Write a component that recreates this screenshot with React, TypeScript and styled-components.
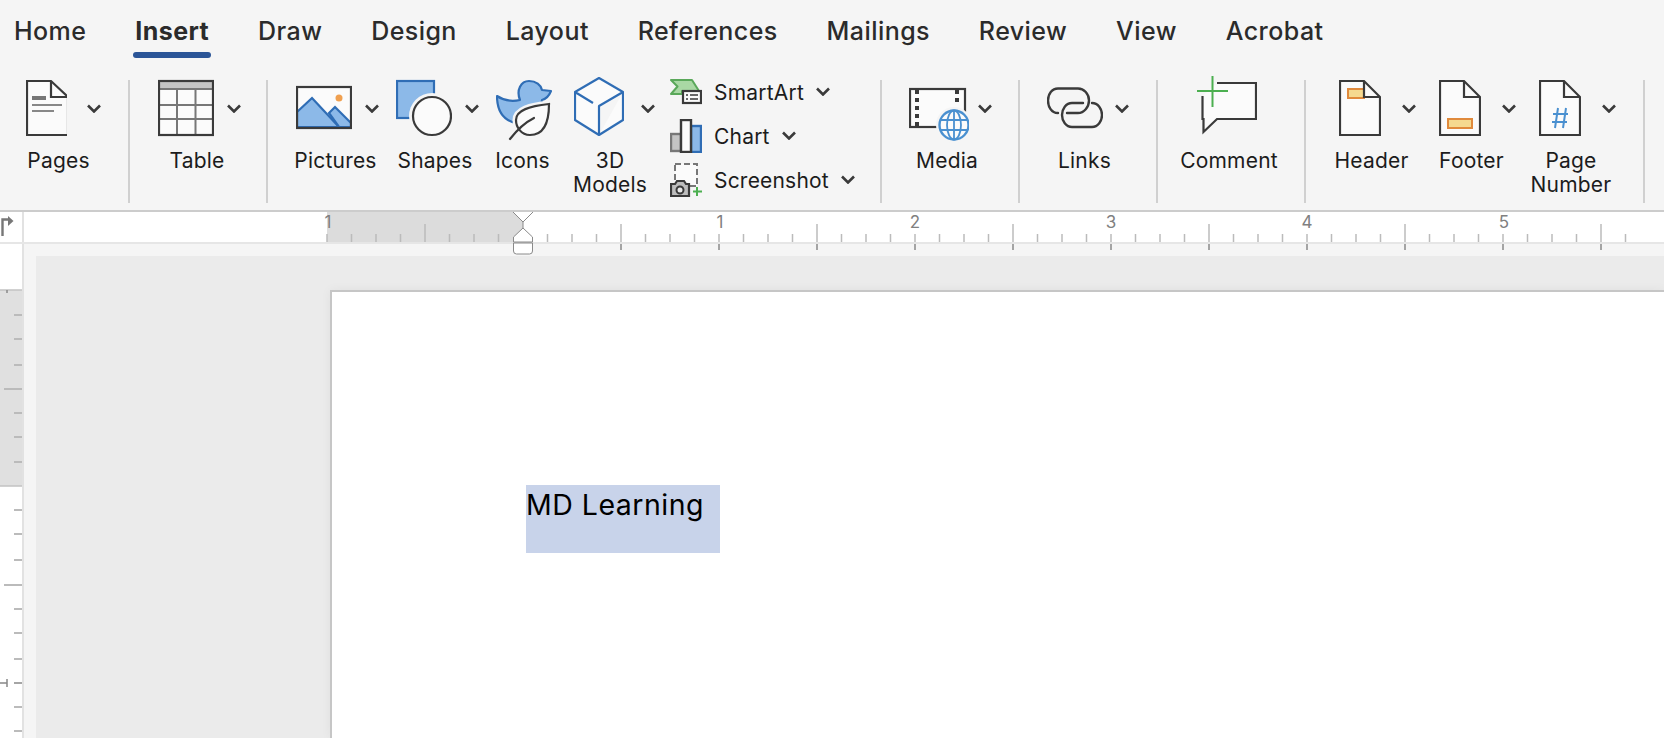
import React from "react";
import styled, { createGlobalStyle } from "styled-components";

const INK = "#3a3a3a";
const BLUE = "#2f6db5";
const SKY = "#8cb9e8";
const PANEL = "#f5f5f5";
const LINE = "2.2";

const GlobalStyle = createGlobalStyle`
  html, body {
    margin: 0;
    height: 100%;
    overflow: hidden;
    background: #ebebeb;
    font-family: Inter, "Liberation Sans", sans-serif;
  }
  #root {
    height: 100%;
  }
`;

const Window = styled.div`
  display: flex;
  flex-direction: column;
  height: 738px;
`;

const Ribbon = styled.header`
  height: 210px;
  flex: none;
  background: ${PANEL};
  border-bottom: 2px solid #cccccc;
`;

const TabBar = styled.nav`
  display: flex;
  gap: 48.8px;
  height: 54px;
  padding: 16px 0 0 14px;
  box-sizing: border-box;
  margin-bottom: 16px;
`;

const Tab = styled.span<{ $active?: boolean }>`
  position: relative;
  height: 30px;
  font-size: 25px;
  line-height: 30px;
  letter-spacing: 0.45px;
  color: #2b2b2b;
  font-weight: ${(p) => (p.$active ? 700 : 500)};

  ${(p) =>
    p.$active &&
    `
    &::after {
      content: "";
      position: absolute;
      left: -2px;
      right: -2px;
      top: 36px;
      height: 6px;
      border-radius: 3px;
      background: #2b5597;
    }
  `}
`;

const Toolbar = styled.div`
  display: flex;
  height: 140px;
`;

const Group = styled.div<{ $width: number; $pad: number }>`
  display: flex;
  flex: none;
  width: ${(p) => p.$width}px;
  padding-left: ${(p) => p.$pad}px;
  box-sizing: border-box;
`;

const Divider = styled.div`
  flex: none;
  width: 2px;
  height: 123px;
  margin-top: 10px;
  background: #d0d0d0;
`;

const Item = styled.div<{ $width: number; $ml?: number }>`
  flex: none;
  width: ${(p) => p.$width}px;
  margin-left: ${(p) => p.$ml ?? 0}px;
  padding-top: 6px;
`;

const IconRow = styled.div<{ $pad: number; $gap?: number }>`
  display: flex;
  align-items: flex-start;
  height: 72px;
  padding-left: ${(p) => p.$pad}px;
  gap: ${(p) => p.$gap ?? 0}px;
`;

const Label = styled.div`
  margin-top: 1px;
  font-size: 21px;
  line-height: 24px;
  letter-spacing: 0.2px;
  text-align: center;
  white-space: nowrap;
  color: #1c1c1c;
`;

const Caret = styled.svg`
  flex: none;
  width: 14px;
  height: 9px;
  fill: none;
  stroke: ${INK};
  stroke-width: 2.6;
`;

const DropCaret = styled(Caret)`
  margin-top: 28px;
`;

const Stack = styled.div`
  display: flex;
  flex-direction: column;
  margin-left: 15px;
`;

const StackRow = styled.div`
  display: flex;
  align-items: center;
  height: 44px;
  font-size: 21px;
  letter-spacing: 0.2px;
  color: #1c1c1c;
`;

const StackIcon = styled.span`
  display: flex;
  flex: none;
  width: 32px;
  margin-right: 12px;
`;

const StackCaret = styled(Caret)`
  margin-left: 12px;
  margin-top: -1px;
`;

const RulerRow = styled.div`
  display: flex;
  flex: none;
  height: 32px;
  background: #ffffff;
  border-bottom: 2px solid #e6e6e6;
  box-sizing: border-box;
`;

const Corner = styled.div`
  flex: none;
  width: 22px;
  border-right: 2px solid #e2e2e2;
`;

const RulerTrack = styled.div`
  position: relative;
  flex: 1;
`;

const RulerDrawing = styled.svg`
  display: block;
  overflow: visible;
`;

const Indent = styled.svg`
  position: absolute;
  left: 489px;
  top: 0;
  overflow: visible;
`;

const Workspace = styled.div`
  display: flex;
  flex: 1;
  min-height: 0;
`;

const SideRuler = styled.div`
  flex: none;
  width: 22px;
  background: #ffffff;
  border-right: 2px solid #e2e2e2;
`;

const Canvas = styled.main`
  flex: 1;
  background: ${PANEL};
  padding: 12px 0 0 12px;
  overflow: hidden;
`;

const Desk = styled.div`
  height: 100%;
  background: #ebebeb;
  padding: 34px 0 0 294px;
  box-sizing: border-box;
`;

const Sheet = styled.div`
  height: 100%;
  background: #ffffff;
  border-top: 2px solid #c6c6c6;
  border-left: 2px solid #c6c6c6;
  box-shadow: 0 0 10px rgba(0, 0, 0, 0.05);
  padding: 193px 0 0 194px;
  box-sizing: border-box;
`;

const Selected = styled.div`
  width: 194px;
  height: 68px;
  background: #c8d3ea;
  color: #000000;
  font-size: 28.5px;
  line-height: 40px;
  letter-spacing: 0.5px;
  white-space: nowrap;
`;

const CaretIcon = ({ as: As = DropCaret }: { as?: typeof DropCaret }) => (
  <As viewBox="0 0 14 9">
    <path d="M1 1.5 L7 7.5 L13 1.5" />
  </As>
);

const PagesIcon = () => (
  <svg width="43" height="72">
    <path d="M1 5H25L42 21V59H1Z" fill="#fbfbfb" stroke={INK} strokeWidth={LINE} />
    <path d="M25 5V21H42" fill="none" stroke={INK} strokeWidth={LINE} />
    <path d="M6 22H20" stroke="#777" strokeWidth="4" />
    <path d="M6 29H36M6 35H28" stroke="#888" strokeWidth="2" />
  </svg>
);

const TableIcon = () => (
  <svg width="56" height="72">
    <rect x="1" y="5" width="54" height="54" fill="#fbfbfb" />
    <rect x="1" y="5" width="54" height="7" fill="#c4c4c4" />
    <path d="M19 12V59M37.5 12V59M1 13H55M1 29H55M1 43H55" stroke="#777" strokeWidth="2" fill="none" />
    <rect x="1" y="5" width="54" height="54" fill="none" stroke={INK} strokeWidth={LINE} />
  </svg>
);

const PicturesIcon = () => (
  <svg width="56" height="72">
    <rect x="1" y="11" width="54" height="41" fill="#fbfbfb" />
    <path d="M1 36L16 22L43 51H1Z" fill={SKY} stroke={BLUE} strokeWidth={LINE} />
    <path d="M33 37L39 31L55 47V51H43Z" fill={SKY} stroke={BLUE} strokeWidth={LINE} />
    <circle cx="43" cy="22" r="3.5" fill="#f0a050" />
    <rect x="1" y="11" width="54" height="41" fill="none" stroke={INK} strokeWidth={LINE} />
  </svg>
);

const ShapesIcon = () => (
  <svg width="56" height="72">
    <rect x="1" y="5" width="37" height="37" fill={SKY} stroke={BLUE} strokeWidth={LINE} />
    <circle cx="36" cy="40" r="23" fill={PANEL} />
    <circle cx="36" cy="40" r="19" fill="#fbfbfb" stroke={INK} strokeWidth={LINE} />
  </svg>
);

const IconsIcon = () => (
  <svg width="56" height="72">
    <path
      d="M1 20C7 24 15 26 24 24C20 14 25 5 33 5C40 5 45 9 46 14L55 15C53 20 50 23 46 24C46 27 44 30 40 32L28 34C22 38 19 42 19 47C8 44 1 36 1 20Z"
      fill={SKY}
      stroke={BLUE}
      strokeWidth={LINE}
      strokeLinejoin="round"
    />
    <path
      d="M53 28C53 48 47 59 34 59C25 59 20 51 20 44C20 34 34 30 53 28Z"
      fill="#fbfbfb"
      stroke={PANEL}
      strokeWidth="7"
    />
    <path d="M53 28C53 48 47 59 34 59C25 59 20 51 20 44C20 34 34 30 53 28Z" fill="#fbfbfb" stroke={INK} strokeWidth={LINE} />
    <path d="M14 63C21 54 28 47 38 42" fill="none" stroke={INK} strokeWidth={LINE} strokeLinecap="round" />
  </svg>
);

const CubeIcon = () => (
  <svg width="50" height="72">
    <path
      d="M25 2L49 16V44L25 59L1 44V16Z M1 16L19 27 M49 16L25 30V59"
      fill="#fbfbfb"
      stroke={BLUE}
      strokeWidth={LINE}
      strokeLinejoin="round"
    />
  </svg>
);

const SmartArtIcon = () => (
  <svg width="32" height="26">
    <path d="M1 1H22L29 12H12V15H1L7.5 7.5Z" fill="#a9d8a4" stroke="#5aa85a" strokeWidth="2" strokeLinejoin="round" />
    <rect x="13" y="12" width="18" height="12" fill="#fbfbfb" stroke={INK} strokeWidth={LINE} />
    <path d="M16 16H18M20 16H28M16 20H18M20 20H28" stroke={INK} strokeWidth="1.6" />
  </svg>
);

const ChartIcon = () => (
  <svg width="32" height="34">
    <rect x="1" y="15" width="10" height="17" fill="#c4c4c4" stroke="#777" strokeWidth="2.4" />
    <rect x="21" y="7" width="10" height="26" fill={SKY} stroke={BLUE} strokeWidth="2.4" />
    <rect x="11" y="1" width="10" height="32" fill="#fbfbfb" stroke={INK} strokeWidth="2.4" />
  </svg>
);

const ScreenshotIcon = () => (
  <svg width="32" height="34">
    <rect x="5" y="1" width="22" height="22" fill="#fbfbfb" stroke="#777" strokeWidth="2" strokeDasharray="6 3" />
    <path d="M1 21H5L7 18H14L16 21H19V33H1Z" fill="#bdbdbd" stroke={INK} strokeWidth={LINE} />
    <circle cx="10" cy="27" r="3.5" fill="#e8e8e8" stroke={INK} strokeWidth="2" />
    <path d="M27 24V33M23 28.5H32" stroke="#4caf50" strokeWidth="2" />
  </svg>
);

const MediaIcon = () => (
  <svg width="60" height="72">
    <rect x="1" y="13" width="55" height="38" fill="#fbfbfb" stroke={INK} strokeWidth={LINE} />
    <path d="M6 16h4M6 24h4M6 32h4M6 40h4M6 48h4M46 16h4M46 24h4" stroke={INK} strokeWidth="4" />
    <circle cx="45" cy="49" r="18" fill={PANEL} />
    <circle cx="45" cy="49" r="14.5" fill="#fbfbfb" stroke="#4a90d0" strokeWidth="2.4" />
    <path d="M31 44H59M31 54H59M45 34V64" stroke="#4a90d0" strokeWidth="1.8" fill="none" />
    <ellipse cx="45" cy="49" rx="7" ry="14.5" stroke="#4a90d0" strokeWidth="1.8" fill="none" />
  </svg>
);

const LinksIcon = () => (
  <svg width="56" height="72">
    <path
      d="M11 37C4 37 1 30 1 24.500C1 18 5 12.500 11 12.500H31C37 12.500 42 18 42 24.500C42 31 37 37 31 37H20"
      fill="none"
      stroke={INK}
      strokeWidth="2.4"
      strokeLinecap="round"
    />
    <path
      d="M36 27H25C19 27 15 33 15 39C15 45 19 51 25 51H45C51 51 55 45 55 39C55 33 51 27 45 27"
      fill="none"
      stroke={INK}
      strokeWidth="2.4"
      strokeLinecap="round"
    />
  </svg>
);

const CommentIcon = () => (
  <svg width="60" height="72">
    <path d="M20 7H59V43H20L6.5 56V43H5.5V20" fill="#fbfbfb" stroke={INK} strokeWidth={LINE} />
    <path d="M15.5 0V31M0 15H31" stroke="#4caf50" strokeWidth="2" />
  </svg>
);

const OutlinedPage = ({ children }: { children?: React.ReactNode }) => (
  <svg width="42" height="72">
    <path d="M1 5H25L41 21V59H1Z" fill="#fbfbfb" stroke={INK} strokeWidth={LINE} />
    {children}
    <path d="M25 5V21H41" fill="none" stroke={INK} strokeWidth={LINE} />
  </svg>
);

const HeaderIcon = () => (
  <OutlinedPage>
    <rect x="9" y="13" width="16" height="9" fill="#f5d98f" stroke="#e08a3c" strokeWidth="2" />
  </OutlinedPage>
);

const FooterIcon = () => (
  <OutlinedPage>
    <rect x="9" y="43" width="24" height="9" fill="#f5d98f" stroke="#e08a3c" strokeWidth="2" />
  </OutlinedPage>
);

const PageNumberIcon = () => (
  <OutlinedPage>
    <path d="M19 32L16 52M27 32L24 52M14 38H29M13 46H28" stroke="#4a90d0" strokeWidth="2" fill="none" />
  </OutlinedPage>
);

const tabs = ["Home", "Insert", "Draw", "Design", "Layout", "References", "Mailings", "Review", "View", "Acrobat"];

const inchMarks = [
  { n: 1, x: 328 },
  { n: 1, x: 720 },
  { n: 2, x: 915 },
  { n: 3, x: 1111 },
  { n: 4, x: 1307 },
  { n: 5, x: 1504 },
];

const ORIGIN = 499;
const STEP = 24.5;
const steps = Array.from({ length: 54 }, (_, i) => i - 8);

const sideTicks = [
  { y: 71, long: false },
  { y: 95, long: false },
  { y: 121, long: false },
  { y: 145, long: true },
  { y: 169, long: false },
  { y: 193, long: false },
  { y: 218, long: false },
  { y: 266, long: false },
  { y: 290, long: false },
  { y: 316, long: false },
  { y: 341, long: true },
  { y: 365, long: false },
  { y: 389, long: false },
  { y: 415, long: false },
  { y: 463, long: false },
  { y: 487, long: false },
];

const TopRuler = () => (
  <RulerDrawing width="1640" height="30">
    <rect x="303" y="0" width="196" height="30" fill="#dcdcdc" />
    {steps.map((i) => {
      if (i === 0) return null;
      const x = ORIGIN + i * STEP;
      const half = i % 8 !== 0 && i % 4 === 0;
      return (
        <g key={i}>
          <path d={`M${x} ${half ? 12 : 22}V30`} stroke="#bbbbbb" strokeWidth="1.5" />
          {i > 0 && i % 4 === 0 && <path d={`M${x} 32V38`} stroke="#888888" strokeWidth="1.5" />}
        </g>
      );
    })}
    {inchMarks.map((m) => (
      <text
        key={m.x}
        x={m.x - 24}
        y="16"
        textAnchor="middle"
        fontFamily="Inter, sans-serif"
        fontSize="17"
        fill="#808080"
      >
        {m.n}
      </text>
    ))}
  </RulerDrawing>
);

const LeftRuler = () => (
  <RulerDrawing width="22" height="494">
    <rect x="0" y="46" width="22" height="196" fill="#e0e0e0" />
    <path d="M0 46H22M0 242H22" stroke="#c2c2c2" strokeWidth="1.5" />
    {sideTicks.map((t) => (
      <path key={t.y} d={`M${t.long ? 4 : 14} ${t.y}H22`} stroke="#bbbbbb" strokeWidth="2" />
    ))}
    <path d="M0 439H7M7 435V443M14 439H22" stroke="#888888" strokeWidth="1.5" />
    <path d="M7 46V49" stroke="#888888" strokeWidth="1.5" />
  </RulerDrawing>
);

export default function App() {
  return (
    <Window>
      <GlobalStyle />
      <Ribbon>
        <TabBar>
          {tabs.map((t) => (
            <Tab key={t} $active={t === "Insert"}>
              {t}
            </Tab>
          ))}
        </TabBar>
        <Toolbar>
          <Group $width={128} $pad={16}>
            <Item $width={85}>
              <IconRow $pad={10} $gap={20}>
                <PagesIcon />
                <CaretIcon />
              </IconRow>
              <Label>Pages</Label>
            </Item>
          </Group>
          <Divider />
          <Group $width={136} $pad={20}>
            <Item $width={94}>
              <IconRow $pad={8} $gap={13}>
                <TableIcon />
                <CaretIcon />
              </IconRow>
              <Label>Table</Label>
            </Item>
          </Group>
          <Divider />
          <Group $width={612} $pad={22}>
            <Item $width={91}>
              <IconRow $pad={6} $gap={13}>
                <PicturesIcon />
                <CaretIcon />
              </IconRow>
              <Label>Pictures</Label>
            </Item>
            <Item $width={94} $ml={7}>
              <IconRow $pad={8} $gap={13}>
                <ShapesIcon />
                <CaretIcon />
              </IconRow>
              <Label>Shapes</Label>
            </Item>
            <Item $width={65} $ml={8}>
              <IconRow $pad={6}>
                <IconsIcon />
              </IconRow>
              <Label>Icons</Label>
            </Item>
            <Item $width={90} $ml={10}>
              <IconRow $pad={9} $gap={17}>
                <CubeIcon />
                <CaretIcon />
              </IconRow>
              <Label>
                3D
                <br />
                Models
              </Label>
            </Item>
            <Stack>
              <StackRow>
                <StackIcon>
                  <SmartArtIcon />
                </StackIcon>
                SmartArt
                <CaretIcon as={StackCaret} />
              </StackRow>
              <StackRow>
                <StackIcon>
                  <ChartIcon />
                </StackIcon>
                Chart
                <CaretIcon as={StackCaret} />
              </StackRow>
              <StackRow>
                <StackIcon>
                  <ScreenshotIcon />
                </StackIcon>
                Screenshot
                <CaretIcon as={StackCaret} />
              </StackRow>
            </Stack>
          </Group>
          <Divider />
          <Group $width={136} $pad={20}>
            <Item $width={90}>
              <IconRow $pad={7} $gap={9}>
                <MediaIcon />
                <CaretIcon />
              </IconRow>
              <Label>Media</Label>
            </Item>
          </Group>
          <Divider />
          <Group $width={136} $pad={20}>
            <Item $width={89}>
              <IconRow $pad={7} $gap={12}>
                <LinksIcon />
                <CaretIcon />
              </IconRow>
              <Label>Links</Label>
            </Item>
          </Group>
          <Divider />
          <Group $width={146} $pad={16}>
            <Item $width={110}>
              <IconRow $pad={23}>
                <CommentIcon />
              </IconRow>
              <Label>Comment</Label>
            </Item>
          </Group>
          <Divider />
          <Group $width={337} $pad={21}>
            <Item $width={89}>
              <IconRow $pad={12} $gap={21}>
                <HeaderIcon />
                <CaretIcon />
              </IconRow>
              <Label>Header</Label>
            </Item>
            <Item $width={89} $ml={11}>
              <IconRow $pad={12} $gap={21}>
                <FooterIcon />
                <CaretIcon />
              </IconRow>
              <Label>Footer</Label>
            </Item>
            <Item $width={90} $ml={10}>
              <IconRow $pad={13} $gap={21}>
                <PageNumberIcon />
                <CaretIcon />
              </IconRow>
              <Label>
                Page
                <br />
                Number
              </Label>
            </Item>
          </Group>
          <Divider />
        </Toolbar>
      </Ribbon>
      <RulerRow>
        <Corner>
          <svg width="22" height="30">
            <path d="M2.5 24V7.5H8" fill="none" stroke="#777777" strokeWidth="2.4" />
            <path d="M8 4L13.5 9L8 14Z" fill="#777777" />
          </svg>
        </Corner>
        <RulerTrack>
          <TopRuler />
          <Indent width="20" height="43">
            <path d="M0 0L10 10L20 0" fill="#ffffff" stroke="#8a8a8a" strokeWidth="1" />
            <path d="M10 16L19.5 25V30H0.5V25Z" fill="#ffffff" stroke="#8a8a8a" strokeWidth="1" />
            <path d="M10 10V16" stroke="#8a8a8a" strokeWidth="1" />
            <path d="M0.5 31H19.5V39Q19.5 42 16.5 42H3.5Q0.5 42 0.5 39Z" fill="#ffffff" stroke="#8a8a8a" strokeWidth="1" />
          </Indent>
        </RulerTrack>
      </RulerRow>
      <Workspace>
        <SideRuler>
          <LeftRuler />
        </SideRuler>
        <Canvas>
          <Desk>
            <Sheet>
              <Selected>MD Learning</Selected>
            </Sheet>
          </Desk>
        </Canvas>
      </Workspace>
    </Window>
  );
}
